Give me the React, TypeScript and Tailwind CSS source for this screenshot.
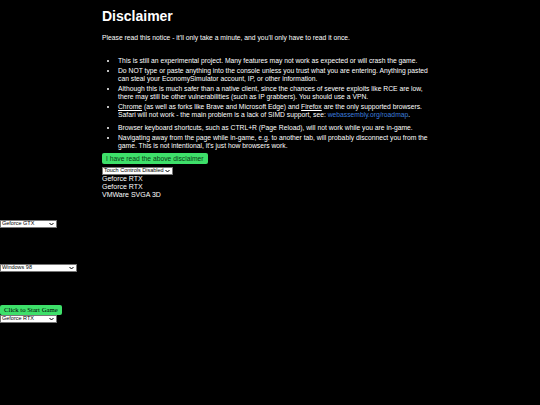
import React from 'react'

const items: React.ReactNode[] = [
  'This is still an experimental project. Many features may not work as expected or will crash the game.',
  'Do NOT type or paste anything into the console unless you trust what you are entering. Anything pasted can steal your EconomySimulator account, IP, or other information.',
  'Although this is much safer than a native client, since the chances of severe exploits like RCE are low, there may still be other vulnerabilities (such as IP grabbers). You should use a VPN.',
  <>
    <span className="underline">Chrome</span> (as well as forks like Brave and Microsoft Edge) and{' '}
    <span className="underline">Firefox</span> are the only supported browsers. Safari will not work - the main
    problem is a lack of SIMD support, see: <span className="text-[#3b7ddd]">webassembly.org/roadmap</span>.
  </>,
  'Browser keyboard shortcuts, such as CTRL+R (Page Reload), will not work while you are in-game.',
  'Navigating away from the page while in-game, e.g. to another tab, will probably disconnect you from the game. This is not intentional, it\'s just how browsers work.',
]

// tiny dropdown, drawn like the native one
function Dropdown({ label, width }: { label: string; width: string }) {
  return (
    <div className={`flex h-[8px] items-center justify-between border border-[#767676] bg-white pl-[1px] pr-[2px] text-[5.5px] leading-none text-black ${width}`}>
      <span>{label}</span>
      <svg width="5" height="4" viewBox="0 0 10 8" className="shrink-0">
        <path d="M1 2l4 4 4-4" fill="none" stroke="black" strokeWidth="2" />
      </svg>
    </div>
  )
}

export default function App() {
  return (
    <div className="min-h-[405px] bg-black font-['Liberation_Sans',Arial,sans-serif] text-white">
      <div className="mx-auto flex w-[336px] flex-col items-start pt-[8px]">
        <h1 className="text-[14px] font-bold leading-[17px]">Disclaimer</h1>
        <p className="mt-[9px] text-[6.75px] leading-[8px]">
          Please read this notice - it'll only take a minute, and you'll only have to read it once.
        </p>
        <ul className="mt-[15px] list-disc pl-[16px] text-[6.75px] leading-[8px]">
          {items.map((item, i) => (
            <li key={i} className={i === 3 ? 'mb-[5px]' : i === 5 ? '' : 'mb-[2px]'}>
              {item}
            </li>
          ))}
        </ul>
        <button className="mt-[3px] rounded-[2px] bg-[#3ee06a] px-[4px] py-[2px] text-[6.75px] leading-[7px] text-[#0b3d16]">
          I have read the above disclaimer
        </button>
        <div className="mt-[3px]">
          <Dropdown label="Touch Controls Disabled" width="w-[71px]" />
        </div>
        <div className="text-[7px] leading-[8px]">
          <div>Geforce RTX</div>
          <div>Geforce RTX</div>
          <div>VMWare SVGA 3D</div>
        </div>
      </div>

      <div className="mt-[21px]">
        <Dropdown label="Geforce GTX" width="w-[57px]" />
      </div>
      <div className="mt-[36px]">
        <Dropdown label="Windows 98" width="w-[77px]" />
      </div>
      <div className="mt-[33px] flex flex-col items-start">
        <button className="rounded-[2px] bg-[#3ee06a] px-[4px] py-[1px] font-['Liberation_Serif',serif] text-[6.75px] leading-[8px] text-black">
          Click to Start Game
        </button>
        <Dropdown label="Geforce RTX" width="w-[57px]" />
      </div>
    </div>
  )
}
